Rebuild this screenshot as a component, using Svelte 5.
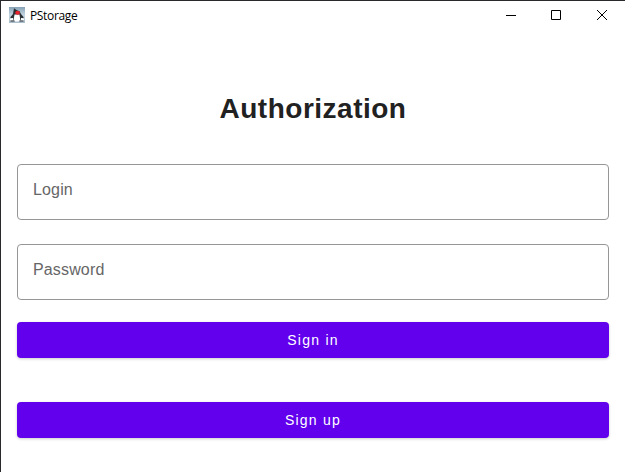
<script>
  let login = $state('');
  let password = $state('');
</script>

<div class="window">
  <header>
    <svg class="logo" width="16" height="16" viewBox="0 0 16 16">
      <defs>
        <linearGradient id="sky" x1="0" y1="0" x2="0" y2="1">
          <stop offset="0" stop-color="#86a2b6" />
          <stop offset=".5" stop-color="#c3d5e1" />
          <stop offset="1" stop-color="#a9bdca" />
        </linearGradient>
      </defs>
      <rect width="16" height="16" fill="url(#sky)" />
      <path d="M5 1.2 7.5 3l3 1.2L12 7l2.5 3v1.5L12 11v2H4v-2l-2.5.5V10L4 7z" fill="#2b3035" />
      <path d="M5.5 7.5h5l.8 5.5-2 1.5h-3L4.5 13z" fill="#fff" />
      <path d="M1 11.5 4 11v2.5H1zM12 11l3 .5v2h-3z" fill="#fff" />
      <path d="M1.5 14h4M10.5 14h4" stroke="#2e3338" />
      <ellipse cx="8.6" cy="5.8" rx="2.4" ry="2" fill="#e8222c" />
    </svg>
    <span class="title">PStorage</span>
    <div class="controls">
      <svg width="46" height="30" viewBox="0 0 46 30"><path d="M18 14.5h10" stroke="#000" /></svg>
      <svg width="46" height="30" viewBox="0 0 46 30"><path d="M17.5 9.5h9v9h-9z" fill="none" stroke="#000" /></svg>
      <svg width="46" height="30" viewBox="0 0 46 30"><path d="m17 9 10 10M27 9 17 19" stroke="#000" stroke-width="1" /></svg>
    </div>
  </header>
  <main>
    <h1>Authorization</h1>
    <input class="login" placeholder="Login" aria-label="Login" bind:value={login} />
    <input type="password" placeholder="Password" aria-label="Password" bind:value={password} />
    <button class="signin">Sign in</button>
    <button class="signup">Sign up</button>
  </main>
</div>

<style>
  .window {
    box-sizing: border-box;
    width: 625px;
    height: 472px;
    overflow: hidden;
    background: #fff;
    border-top: 1px solid #29282a;
    border-left: 1px solid #29282a;
    font-family: "Liberation Sans", Arial, sans-serif;
  }
  header {
    display: flex;
    align-items: center;
    height: 30px;
    padding-left: 8px;
  }
  .logo { display: block; margin-top: -2px; }
  .title {
    margin-left: 5px;
    font: 12px/16px "Open Sans", "Noto Sans", sans-serif;
    color: #000;
    letter-spacing: -0.35px;
  }
  .controls { display: flex; margin-left: auto; margin-right: -1px; }
  .controls svg { display: block; }
  main {
    display: flex;
    flex-direction: column;
    padding: 0 16px;
  }
  h1 {
    margin: 62px 0 0;
    text-align: center;
    font-size: 28px;
    line-height: 32px;
    font-weight: 700;
    letter-spacing: 0.5px;
    color: #212121;
  }
  input {
    box-sizing: border-box;
    height: 56px;
    margin: 24px 0 0;
    padding: 0 15px 4px;
    border: 1px solid #969696;
    border-radius: 4px;
    background: #fff;
    outline: none;
    font: 16px "Liberation Sans", Arial, sans-serif;
    letter-spacing: 0.15px;
    color: #212121;
  }
  .login { margin-top: 39px; }
  input::placeholder { color: #666; opacity: 1; }
  button {
    height: 36px;
    padding: 0;
    border: 0;
    border-radius: 4px;
    background: #6200ee;
    color: #fff;
    font: 14px "Liberation Sans", Arial, sans-serif;
    letter-spacing: 1.25px;
    box-shadow: 0 1px 3px rgba(0, 0, 0, 0.2);
  }
  .signin { margin-top: 22px; }
  .signup { margin-top: 44px; }
</style>
